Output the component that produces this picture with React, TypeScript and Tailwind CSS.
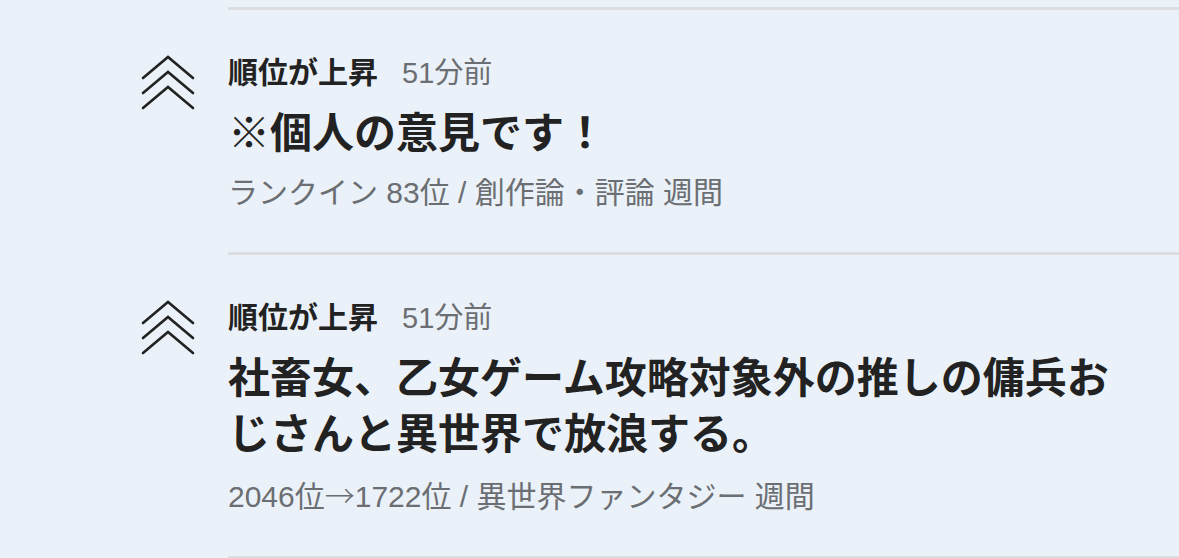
const FONT = '"Liberation Sans", "Noto Sans CJK JP", sans-serif'

interface Item {
  title: string
  meta: React.ReactNode
}

const items: Item[] = [
  { title: "※個人の意見です！", meta: "ランクイン 83位 / 創作論・評論 週間" },
  {
    title: "社畜女、乙女ゲーム攻略対象外の推しの傭兵おじさんと異世界で放浪する。",
    meta: (
      <>
        2046位<span className="font-['Noto_Sans_CJK_JP'] font-light">→</span>1722位 / 異世界ファンタジー 週間
      </>
    ),
  },
]

function RankUpIcon() {
  return (
    <svg width="54" height="58" viewBox="0 0 54 58" fill="none" stroke="#222" strokeWidth="2.6" strokeLinecap="round">
      <path d="M2 24 L27 3 L52 24" />
      <path d="M2 39 L27 18 L52 39" />
      <path d="M2 54 L27 33 L52 54" />
    </svg>
  )
}

export default function App() {
  return (
    <div className="w-[1179px] h-[558px] overflow-hidden bg-[#eaf1f8]" style={{ fontFamily: FONT }}>
      <div className="h-[7px]" />
      {items.map((item, i) => (
        <div key={i} className="flex">
          <div className="w-[228px] shrink-0 flex justify-end pr-[33px] pt-[47px]">
            <div>
              <RankUpIcon />
            </div>
          </div>
          <div className="flex-1 border-t-[3px] border-[#dcdedf] pt-[44px] pb-[40px] pr-[48px]">
            <div className="flex items-baseline gap-[24px] leading-[38px]">
              <span className="text-[30px] font-bold text-[#222]">順位が上昇</span>
              <span className="text-[29px] text-[#6b6e72]">51分前</span>
            </div>
            <h2 className="mt-[14px] text-[42px] font-bold leading-[56px] text-[#222]">{item.title}</h2>
            <p className="mt-[12px] text-[30px] leading-[38px] text-[#6b6e72]">{item.meta}</p>
          </div>
        </div>
      ))}
      <div className="ml-[228px] border-t-[3px] border-[#dcdedf]" />
    </div>
  )
}
